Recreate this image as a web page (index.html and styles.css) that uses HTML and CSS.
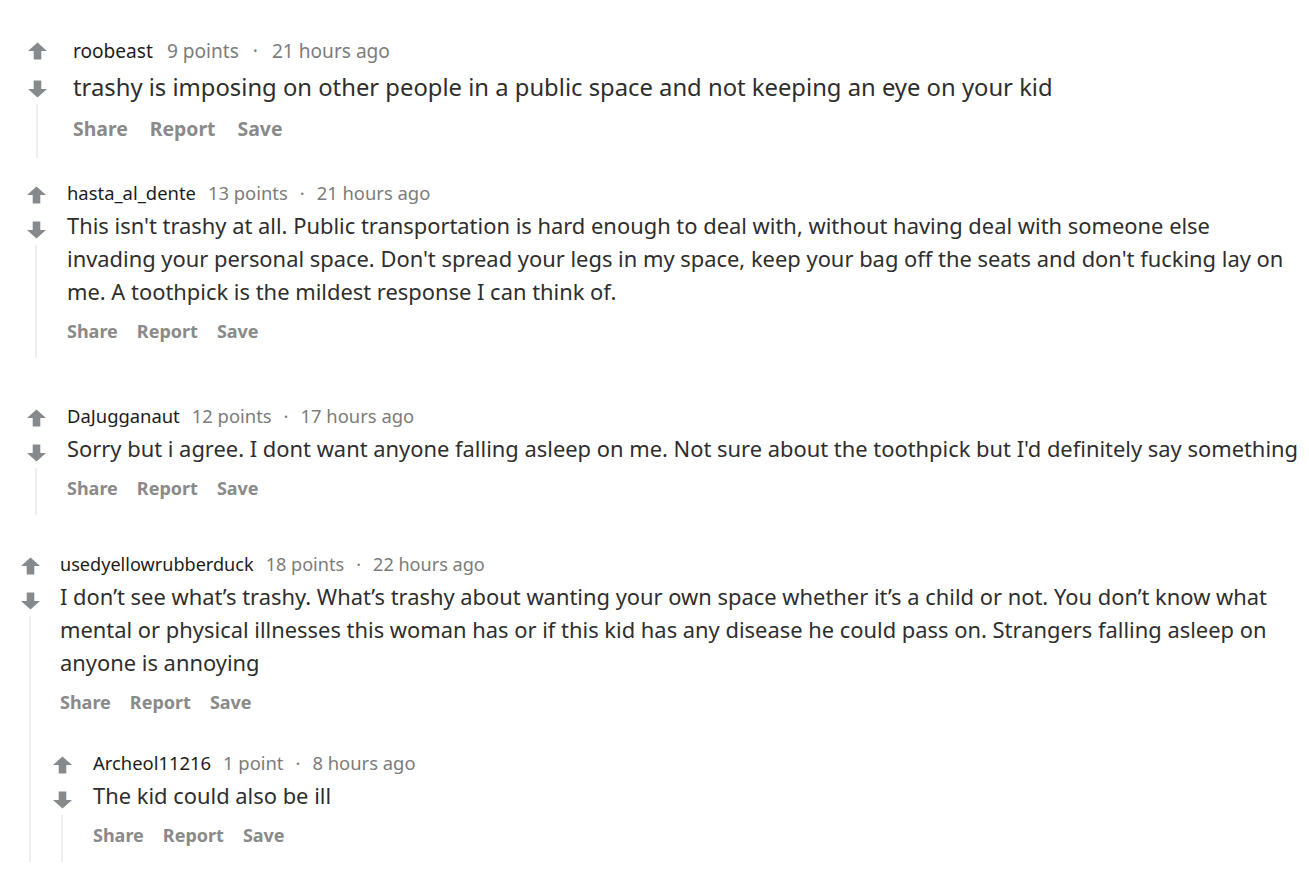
FILE: index.html
```html
<!DOCTYPE html>
<html>
<head>
<meta charset="utf-8">
<link rel="stylesheet" href="styles.css">
</head>
<body>
<div class="page">

  <div class="comment c1">
    <div class="rail">
      <svg class="vote" viewBox="0 0 20 18"><path d="M10 0 L20 9 H14 V18 H6 V9 H0 Z"/></svg>
      <svg class="vote down" viewBox="0 0 20 18"><path d="M10 18 L20 9 H14 V0 H6 V9 H0 Z"/></svg>
      <div class="line"></div>
    </div>
    <div class="main">
      <div class="meta"><span class="user">roobeast</span><span class="pts">9 points</span><span class="dot">·</span><span class="pts">21 hours ago</span></div>
      <p class="body">trashy is imposing on other people in a public space and not keeping an eye on your kid</p>
      <div class="actions"><span>Share</span><span>Report</span><span>Save</span></div>
    </div>
  </div>

  <div class="comment c2">
    <div class="rail">
      <svg class="vote" viewBox="0 0 20 18"><path d="M10 0 L20 9 H14 V18 H6 V9 H0 Z"/></svg>
      <svg class="vote down" viewBox="0 0 20 18"><path d="M10 18 L20 9 H14 V0 H6 V9 H0 Z"/></svg>
      <div class="line"></div>
    </div>
    <div class="main">
      <div class="meta"><span class="user">hasta_al_dente</span><span class="pts">13 points</span><span class="dot">·</span><span class="pts">21 hours ago</span></div>
      <p class="body">This isn't trashy at all. Public transportation is hard enough to deal with, without having deal with someone else invading your personal space. Don't spread your legs in my space, keep your bag off the seats and don't fucking lay on me. A toothpick is the mildest response I can think of.</p>
      <div class="actions"><span>Share</span><span>Report</span><span>Save</span></div>
    </div>
  </div>

  <div class="comment c3">
    <div class="rail">
      <svg class="vote" viewBox="0 0 20 18"><path d="M10 0 L20 9 H14 V18 H6 V9 H0 Z"/></svg>
      <svg class="vote down" viewBox="0 0 20 18"><path d="M10 18 L20 9 H14 V0 H6 V9 H0 Z"/></svg>
      <div class="line"></div>
    </div>
    <div class="main">
      <div class="meta"><span class="user">DaJugganaut</span><span class="pts">12 points</span><span class="dot">·</span><span class="pts">17 hours ago</span></div>
      <p class="body">Sorry but i agree. I dont want anyone falling asleep on me. Not sure about the toothpick but I'd definitely say something</p>
      <div class="actions"><span>Share</span><span>Report</span><span>Save</span></div>
    </div>
  </div>

  <div class="comment c4">
    <div class="rail">
      <svg class="vote" viewBox="0 0 20 18"><path d="M10 0 L20 9 H14 V18 H6 V9 H0 Z"/></svg>
      <svg class="vote down" viewBox="0 0 20 18"><path d="M10 18 L20 9 H14 V0 H6 V9 H0 Z"/></svg>
      <div class="line"></div>
    </div>
    <div class="main">
      <div class="meta"><span class="user">usedyellowrubberduck</span><span class="pts">18 points</span><span class="dot">·</span><span class="pts">22 hours ago</span></div>
      <p class="body">I don’t see what’s trashy. What’s trashy about wanting your own space whether it’s a child or not. You don’t know what mental or physical illnesses this woman has or if this kid has any disease he could pass on. Strangers falling asleep on anyone is annoying</p>
      <div class="actions"><span>Share</span><span>Report</span><span>Save</span></div>

      <div class="comment c5">
        <div class="rail">
          <svg class="vote" viewBox="0 0 20 18"><path d="M10 0 L20 9 H14 V18 H6 V9 H0 Z"/></svg>
          <svg class="vote down" viewBox="0 0 20 18"><path d="M10 18 L20 9 H14 V0 H6 V9 H0 Z"/></svg>
          <div class="line"></div>
        </div>
        <div class="main">
          <div class="meta"><span class="user">Archeol11216</span><span class="pts">1 point</span><span class="dot">·</span><span class="pts">8 hours ago</span></div>
          <p class="body">The kid could also be ill</p>
          <div class="actions"><span>Share</span><span>Report</span><span>Save</span></div>
        </div>
      </div>
    </div>
  </div>

</div>
</body>
</html>
```

FILE: styles.css
```css
* { box-sizing: border-box; }
html, body { margin: 0; padding: 0; background: #ffffff; }
body { width: 1309px; height: 881px; overflow: hidden; }

.page {
  display: flex;
  flex-direction: column;
  padding-top: 38px;
}

.comment {
  display: flex;
  align-items: stretch;
}

.rail {
  display: flex;
  flex-direction: column;
  align-items: center;
  width: 20px;
  flex: none;
  padding-top: 5px;
}

.vote {
  width: 19px;
  height: 18px;
  fill: #878a8c;
  display: block;
  flex: none;
}
.vote.down { margin-top: 17px; }

.line {
  width: 2px;
  background: #edeff1;
  flex: 1;
  margin-top: 6px;
}

.main {
  display: flex;
  flex-direction: column;
  min-width: 0;
  max-width: 1236px;
  padding-bottom: 15px;
}

.meta {
  font-family: "Noto Sans", sans-serif;
  font-size: 18.4px;
  line-height: 24px;
  color: #7c7c7c;
  display: flex;
  gap: 12px;
  white-space: nowrap;
}
.meta .user { color: #1c1c1c; }
.meta .dot { margin: 0; }

.body {
  margin: 4px 0 0;
  font-family: "Noto Sans", sans-serif;
  font-size: 21.9px;
  line-height: 33px;
  color: #2e2e2e;
}

.actions {
  font-family: "Noto Sans", sans-serif;
  font-weight: 700;
  font-size: 18px;
  line-height: 24px;
  color: #8a8a8a;
  display: flex;
  gap: 19px;
  margin-top: 11px;
}

/* comment 1 is captured at a slightly larger scale */
.c1 { margin-left: 27px; }
.c1 .main { margin-left: 26px; padding-bottom: 16px; }
.c1 .meta { font-size: 19.1px; line-height: 26px; gap: 14px; }
.c1 .body { font-size: 23.8px; line-height: 34px; margin-top: 6px; }
.c1 .actions { font-size: 19.4px; line-height: 26px; gap: 22px; margin-top: 12px; }
.c1 .rail { padding-top: 4px; }
.c1 .vote.down { margin-top: 20px; }

.c2 { margin-left: 26px; margin-top: 23px; }
.c2 .main { margin-left: 21px; }

.c3 { margin-left: 26px; margin-top: 46px; }
.c3 .main { margin-left: 21px; }

.c4 { margin-left: 20px; margin-top: 37px; }
.c4 > .main { margin-left: 20px; padding-bottom: 0; }
.c4 .meta { font-size: 18.1px; }

.c5 { margin-left: -8px; margin-top: 37px; }
.c5 > .main { margin-left: 21px; padding-bottom: 15px; }
.c5 .meta { font-size: 18.4px; }
```
